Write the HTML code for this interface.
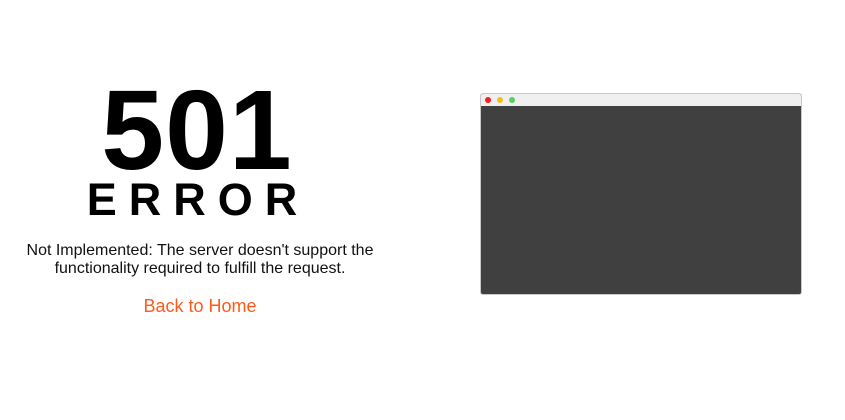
<!DOCTYPE html>
<html><head><style>
body{margin:0;width:845px;height:420px;background:#fff;font-family:"Liberation Sans",Arial,sans-serif;position:relative;overflow:hidden}
.num{position:absolute;left:-3px;width:400px;top:74px;font-size:113px;font-weight:bold;line-height:113px;text-align:center;letter-spacing:1px}
.err{position:absolute;left:-8px;width:400px;top:173px;font-size:45px;font-weight:bold;line-height:54px;letter-spacing:12px;text-indent:12px;text-align:center}
.msg{position:absolute;left:20px;width:360px;top:242px;font-size:16px;line-height:18px;color:#111;text-align:center}
.link{position:absolute;left:0;width:400px;top:296px;font-size:18px;color:#ff5a1a;text-align:center}
.win{position:absolute;left:480px;top:93px;width:320px;height:200px;border:1px solid #c8c8c8;border-radius:3px;background:#404040;overflow:hidden}
.bar{height:12px;background:#f0f0f0}
.d{position:absolute;top:3px;width:6px;height:6px;border-radius:50%}
</style></head><body>
<div class="num">501</div>
<div class="err">ERROR</div>
<div class="msg">Not Implemented: The server doesn't support the functionality required to fulfill the request.</div>
<div class="link">Back to Home</div>
<div class="win"><div class="bar"></div>
<div class="d" style="left:4px;background:#ff1a1a"></div>
<div class="d" style="left:16px;background:#f0c020"></div>
<div class="d" style="left:28px;background:#5cd05c"></div>
</div>
</body></html>
